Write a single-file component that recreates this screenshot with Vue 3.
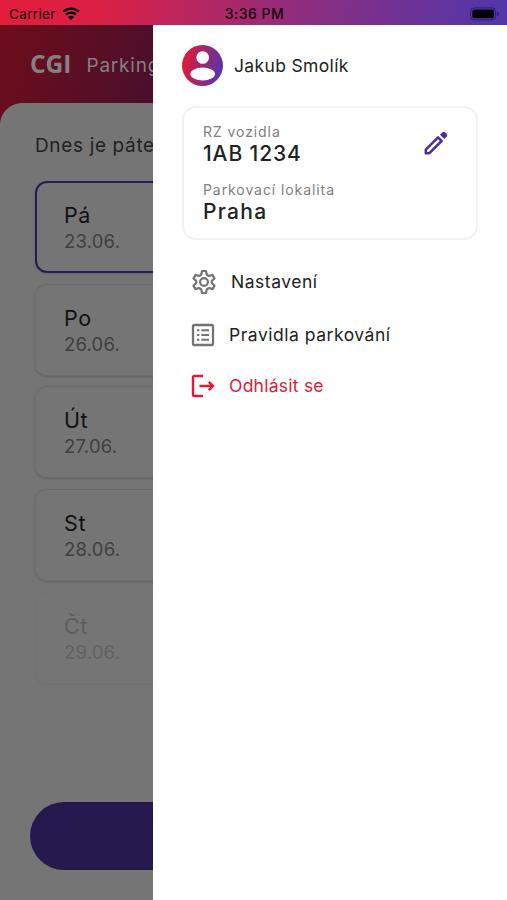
<script setup>
const days = [
  { name: 'Pá', date: '23.06.', state: 'selected' },
  { name: 'Po', date: '26.06.', state: '' },
  { name: 'Út', date: '27.06.', state: '' },
  { name: 'St', date: '28.06.', state: '' },
  { name: 'Čt', date: '29.06.', state: 'disabled' }
]
</script>

<template>
  <div class="screen">
    <header class="status">
      <div class="carrier">
        <span>Carrier</span>
        <svg class="wifi" viewBox="0 0 18 13" width="18" height="13">
          <path d="M1.2 4.6C5.6.5 12.4.5 16.8 4.6M4 7.6c2.8-2.6 7.2-2.6 10 0" fill="none" stroke="#090307" stroke-width="2.3" />
          <path d="M6 9.9c1.7-1.5 4.3-1.5 6 0L9 13z" fill="#090307" />
        </svg>
      </div>
      <span class="clock">3:36 PM</span>
      <svg class="battery" viewBox="0 0 30 14" width="30" height="14">
        <rect x=".6" y=".9" width="25" height="12" rx="3.5" fill="none" stroke="#2a1557" stroke-opacity=".75" />
        <rect x="2.3" y="2.6" width="21.7" height="8.6" rx="1.8" fill="#05010a" />
        <path d="M27.4 5c1.7.5 1.7 3.5 0 4z" fill="#2a1557" />
      </svg>
    </header>

    <main class="body">
      <section class="page">
        <div class="brand">
          <span class="logo">CGI</span>
          <span class="product">Parking</span>
        </div>
        <div class="sheet">
          <h1 class="today">Dnes je pátek</h1>
          <div class="days">
            <article v-for="day in days" :key="day.date" class="day" :class="day.state">
              <span class="day-name">{{ day.name }}</span>
              <span class="day-date">{{ day.date }}</span>
            </article>
          </div>
          <div class="action"></div>
        </div>
      </section>

      <aside class="drawer">
        <div class="user">
          <svg viewBox="0 0 41 41" width="41" height="41">
            <defs>
              <linearGradient id="avatar" x1="0" y1=".4" x2="1" y2=".6">
                <stop offset="0" stop-color="#e31937" />
                <stop offset="1" stop-color="#5236ab" />
              </linearGradient>
            </defs>
            <circle cx="20.5" cy="20.5" r="20.5" fill="url(#avatar)" />
            <circle cx="20.7" cy="12.5" r="6.3" fill="#fff" />
            <ellipse cx="20.7" cy="29" rx="12.3" ry="6.5" fill="#fff" />
          </svg>
          <span class="user-name">Jakub Smolík</span>
        </div>

        <section class="vehicle">
          <div class="fields">
            <span class="label plate-label">RZ vozidla</span>
            <span class="value plate">1AB 1234</span>
            <span class="label place-label">Parkovací lokalita</span>
            <span class="value place">Praha</span>
          </div>
          <svg class="pencil" viewBox="0 0 24 24" width="24" height="24">
            <path d="M1.8 18.6 14 6.4l3.600 3.600L5.400 22.200H1.800z" fill="none" stroke="#4a2fa3" stroke-width="2.500" stroke-linejoin="round" />
            <path d="m16 3.700 2.300-2.300q1.500-1.400 3 0l1.300 1.300q1.400 1.500 0 3L20.300 8z" fill="#4a2fa3" />
          </svg>
        </section>

        <nav class="menu">
          <a class="item settings">
            <svg viewBox="0 0 26 26" width="26" height="26" fill="none" stroke="#747474" stroke-width="2.2" stroke-linejoin="round">
              <path d="M11 2h4l.8 3.700 2.200 1.300 3.500-1.100 2 3.500L20.800 12v2l2.700 2.600-2 3.500-3.500-1.100-2.200 1.300L15 24h-4l-.8-3.700L8 19l-3.500 1.100-2-3.500L5.200 14v-2L2.500 9.400l2-3.500L8 7l2.200-1.300z" />
              <circle cx="13" cy="13" r="3.9" />
            </svg>
            <span>Nastavení</span>
          </a>
          <a class="item rules">
            <svg viewBox="0 0 24 24" width="24" height="24">
              <rect x="2" y="2" width="20" height="20" rx="1.5" fill="none" stroke="#747474" stroke-width="2.3" />
              <path d="M6 7.300h2.300M6 12h2.300M6 16.700h2.300M10.300 7.300H18M10.300 12H18M10.300 16.700H18" stroke="#747474" stroke-width="2" />
            </svg>
            <span>Pravidla parkování</span>
          </a>
          <a class="item logout">
            <svg viewBox="0 0 24 24" width="24" height="24" fill="none" stroke="#e31937" stroke-width="2.4">
              <path d="M12 2H3.500Q2 2 2 3.500v17Q2 22 3.500 22H12" />
              <path d="M8.500 12H22M17.800 7.800l4.200 4.200-4.200 4.200" />
            </svg>
            <span>Odhlásit se</span>
          </a>
        </nav>
      </aside>
    </main>
  </div>
</template>

<style>
body {
  margin: 0;
}
</style>

<style scoped>
.screen {
  width: 507px;
  height: 900px;
  overflow: hidden;
  display: flex;
  flex-direction: column;
  font-family: Inter, "Noto Sans", sans-serif;
  color: #222;
  white-space: nowrap;
}

.status {
  height: 25px;
  flex: none;
  display: grid;
  grid-template-columns: 1fr auto 1fr;
  align-items: center;
  box-sizing: border-box;
  padding: 2px 7px 0 9px;
  background: linear-gradient(98deg, #e31d3d 0%, #db2045 20%, #8d2d80 60%, #5236ab 98%);
  color: #14040b;
  font-size: 13.5px;
  line-height: 22px;
}

.carrier {
  display: flex;
  align-items: center;
  gap: 6px;
  letter-spacing: 0.35px;
}

.clock {
  font-weight: 500;
  font-size: 14px;
  letter-spacing: 0.5px;
}

.battery {
  justify-self: end;
}

.body {
  flex: 1;
  min-height: 0;
  display: grid;
  grid-template-columns: 153px 354px;
}

.page {
  display: flex;
  flex-direction: column;
  min-width: 0;
  overflow: hidden;
  background: linear-gradient(110deg, #6d0c1b 0%, #610e21 35%, #460f2e 100%) 0 0 / 100% 118px no-repeat, #757575;
}

.brand {
  height: 78px;
  flex: none;
  display: flex;
  align-items: center;
  padding-left: 30px;
  gap: 14px;
  color: #858083;
}

.logo {
  width: 42px;
  font: 700 24.5px/30px "Open Sans", sans-serif;
  letter-spacing: 0;
}

.product {
  font-size: 19px;
  letter-spacing: 0.8px;
  padding: 2px 0 0 1px;
}

.sheet {
  flex: 1;
  display: flex;
  flex-direction: column;
  padding: 29px 0 0 30px;
  background: #757575;
  border-top-left-radius: 22px;
}

.today {
  margin: 0 0 21px 5px;
  font-size: 19px;
  line-height: 28px;
  font-weight: 400;
  letter-spacing: 0.65px;
}

.days {
  display: flex;
  flex-direction: column;
  gap: 10.7px;
  padding-left: 5px;
}

.day {
  width: 200px;
  height: 92px;
  box-sizing: border-box;
  display: flex;
  flex-direction: column;
  padding: 20px 0 0 28px;
  border: 1px solid #6b6b6b;
  border-left-color: #707070;
  border-radius: 12px;
  box-shadow: 0 1px 2px #606060;
}

.day.selected {
  border: 2px solid #281a58;
  padding: 19px 0 0 27px;
  box-shadow: 0 1px 2px #686868;
}

.day.disabled {
  border-color: #737373;
  box-shadow: 0 1px 1px #717171;
}

.day-name {
  font-size: 21.5px;
  line-height: 27px;
  letter-spacing: 0.6px;
  color: #111;
}

.day-date {
  font-size: 18.5px;
  line-height: 24px;
  color: #404040;
  letter-spacing: 0.2px;
}

.disabled .day-name {
  color: #5d5d5d;
}

.disabled .day-date {
  color: #626262;
}

.action {
  margin-top: 118px;
  width: 250px;
  height: 68px;
  border-radius: 34px;
  background: #26194e;
}

.drawer {
  background: #fff;
  padding: 20px 29px 0;
}

.user {
  display: flex;
  align-items: center;
  gap: 11px;
  height: 41px;
}

.user-name {
  font-size: 17.5px;
  letter-spacing: 0.35px;
}

.vehicle {
  margin-top: 20px;
  height: 134px;
  box-sizing: border-box;
  display: flex;
  justify-content: space-between;
  padding: 14px 28px 0 19px;
  border: 2px solid #f1f1f1;
  border-radius: 14px;
}

.fields {
  display: flex;
  flex-direction: column;
}

.label {
  font-size: 14px;
  line-height: 20px;
  color: #808080;
  letter-spacing: 0.92px;
}

.value {
  font-size: 21px;
  line-height: 24px;
  font-weight: 500;
  color: #222;
  letter-spacing: 0.9px;
}

.place {
  letter-spacing: 1.3px;
}

.place-label {
  margin-top: 14px;
}

.pencil {
  margin-top: 9px;
}

.menu {
  display: flex;
  flex-direction: column;
  padding: 28px 0 0 9px;
}

.item {
  display: flex;
  align-items: center;
  height: 28px;
  gap: 14px;
  font-size: 17.5px;
  letter-spacing: 0.52px;
}

.item span {
  padding-bottom: 1px;
}

.rules {
  margin-top: 24.5px;
}

.logout {
  margin-top: 23.5px;
  color: #e31937;
  letter-spacing: 0.25px;
}
</style>
